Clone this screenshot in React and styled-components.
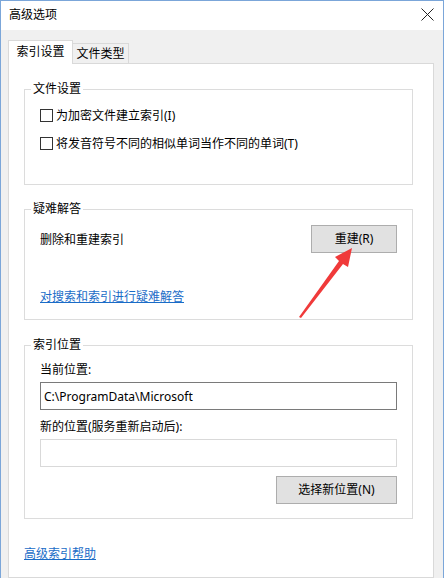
import React from 'react';
import styled, { createGlobalStyle } from 'styled-components';

const GlobalStyle = createGlobalStyle`
  html, body {
    margin: 0;
    padding: 0;
    background: #ffffff;
  }
  * {
    box-sizing: border-box;
  }
`;

const font = `"Noto Sans", "Noto Sans CJK SC", sans-serif`;

const Window = styled.div`
  position: relative;
  width: 444px;
  height: 578px;
  display: flex;
  flex-direction: column;
  border: 1px solid #7ba6d9;
  border-bottom: none;
  font-family: ${font};
  font-size: 12px;
  color: #000;
  overflow: hidden;
`;

const TitleBar = styled.div`
  height: 29px;
  flex-shrink: 0;
  display: flex;
  align-items: center;
  justify-content: space-between;
  padding: 0 8px 0 8px;
  background: #fff;
`;

const Title = styled.span`
  font-size: 12px;
  line-height: 16px;
  margin-top: -2px;
`;

const Close = styled.div`
  width: 14px;
  height: 14px;
  display: flex;
  align-items: center;
  justify-content: center;
  margin-top: -3px;
  margin-right: 1px;
`;

const Body = styled.div`
  flex: 1;
  display: flex;
  flex-direction: column;
  background: #f0f0f0;
  padding: 10px 9px 0 7px;
`;

const Tabs = styled.div`
  display: flex;
  align-items: flex-end;
  position: relative;
  z-index: 1;
`;

const Tab = styled.div`
  width: ${p => (p.$active ? 65 : 57)}px;
  height: ${p => (p.$active ? 24 : 20)}px;
  margin-bottom: ${p => (p.$active ? -1 : 0)}px;
  margin-left: ${p => (p.$active ? 0 : -1)}px;
  display: flex;
  align-items: center;
  justify-content: center;
  padding-bottom: ${p => (p.$active ? 1 : 0)}px;
  border: 1px solid #d9d9d9;
  border-bottom: none;
  background: ${p => (p.$active ? '#fff' : '#f0f0f0')};
  line-height: 16px;
`;

const Panel = styled.div`
  flex: 1;
  display: flex;
  flex-direction: column;
  background: #fff;
  border: 1px solid #d9d9d9;
  padding: 17px 20px 0 15px;
`;

const Group = styled.fieldset`
  margin: ${p => p.$gap || 0}px 0 0 0;
  padding: 0 6px;
  border: 1px solid #dcdcdc;
  min-width: 0;
`;

const Legend = styled.legend`
  padding: 0 2px;
  font-size: 12px;
  line-height: 16px;
`;

const GroupBody = styled.div`
  display: flex;
  flex-direction: column;
  padding: ${p => p.$pad};
`;

const CheckRow = styled.label`
  display: flex;
  align-items: center;
  gap: 3px;
  height: 20px;
  margin-top: ${p => p.$gap || 0}px;
`;

const Box = styled.span`
  width: 13px;
  height: 13px;
  border: 1px solid #333;
  background: #fff;
  flex-shrink: 0;
`;

const ActionRow = styled.div`
  display: flex;
  align-items: center;
  justify-content: space-between;
  height: 28px;
`;

const Button = styled.div`
  width: ${p => p.$w}px;
  height: 28px;
  display: flex;
  align-items: center;
  justify-content: center;
  background: #e1e1e1;
  border: 1px solid #adadad;
  align-self: flex-end;
  margin-top: ${p => p.$gap || 0}px;
  line-height: 16px;
`;

const Link = styled.a`
  display: block;
  color: #1a6cc7;
  text-decoration: underline;
  line-height: 16px;
  align-self: flex-start;
  margin-top: ${p => p.$gap || 0}px;
  cursor: pointer;
`;

const Label = styled.div`
  line-height: 16px;
  margin-top: ${p => p.$gap || 0}px;
`;

const Field = styled.div`
  height: 28px;
  margin-top: 4px;
  display: flex;
  align-items: center;
  padding: 0 3px;
  border: 1px solid ${p => (p.$disabled ? '#d9d9d9' : '#7a7a7a')};
  background: #fff;
  font-size: 12px;
`;

const Arrow = styled.svg`
  position: absolute;
  left: -1px;
  top: -1px;
  pointer-events: none;
`;

export default function App() {
  return (
    <>
      <GlobalStyle />
      <Window>
        <TitleBar>
          <Title>高级选项</Title>
          <Close>
            <svg width="13" height="13" viewBox="0 0 13 13">
              <path d="M0.5 0.5 L12.5 12.5 M12.5 0.5 L0.5 12.5" stroke="#222" strokeWidth="1" />
            </svg>
          </Close>
        </TitleBar>
        <Body>
          <Tabs>
            <Tab $active>索引设置</Tab>
            <Tab>文件类型</Tab>
          </Tabs>
          <Panel>
            <Group>
              <Legend>文件设置</Legend>
              <GroupBody $pad="8px 9px 31px">
                <CheckRow>
                  <Box />
                  为加密文件建立索引(I)
                </CheckRow>
                <CheckRow $gap={8}>
                  <Box />
                  将发音符号不同的相似单词当作不同的单词(T)
                </CheckRow>
              </GroupBody>
            </Group>

            <Group $gap={16}>
              <Legend>疑难解答</Legend>
              <GroupBody $pad="8px 9px 14px">
                <ActionRow>
                  <span>删除和重建索引</span>
                  <Button $w={86}>重建(R)</Button>
                </ActionRow>
                <Link $gap={36}>对搜索和索引进行疑难解答</Link>
              </GroupBody>
            </Group>

            <Group $gap={17}>
              <Legend>索引位置</Legend>
              <GroupBody $pad="9px 9px 14px">
                <Label>当前位置:</Label>
                <Field>C:\ProgramData\Microsoft</Field>
                <Label $gap={9}>新的位置(服务重新启动后):</Label>
                <Field $disabled />
                <Button $w={121} $gap={9}>选择新位置(N)</Button>
              </GroupBody>
            </Group>

            <Link $gap={27}>高级索引帮助</Link>
          </Panel>
        </Body>
        <Arrow width="444" height="578" viewBox="0 0 444 578">
          <polygon
            points="299,317 301,318 343,264 348,267 352,248 335,257 339,261"
            fill="#f03a3a"
          />
        </Arrow>
      </Window>
    </>
  );
}
